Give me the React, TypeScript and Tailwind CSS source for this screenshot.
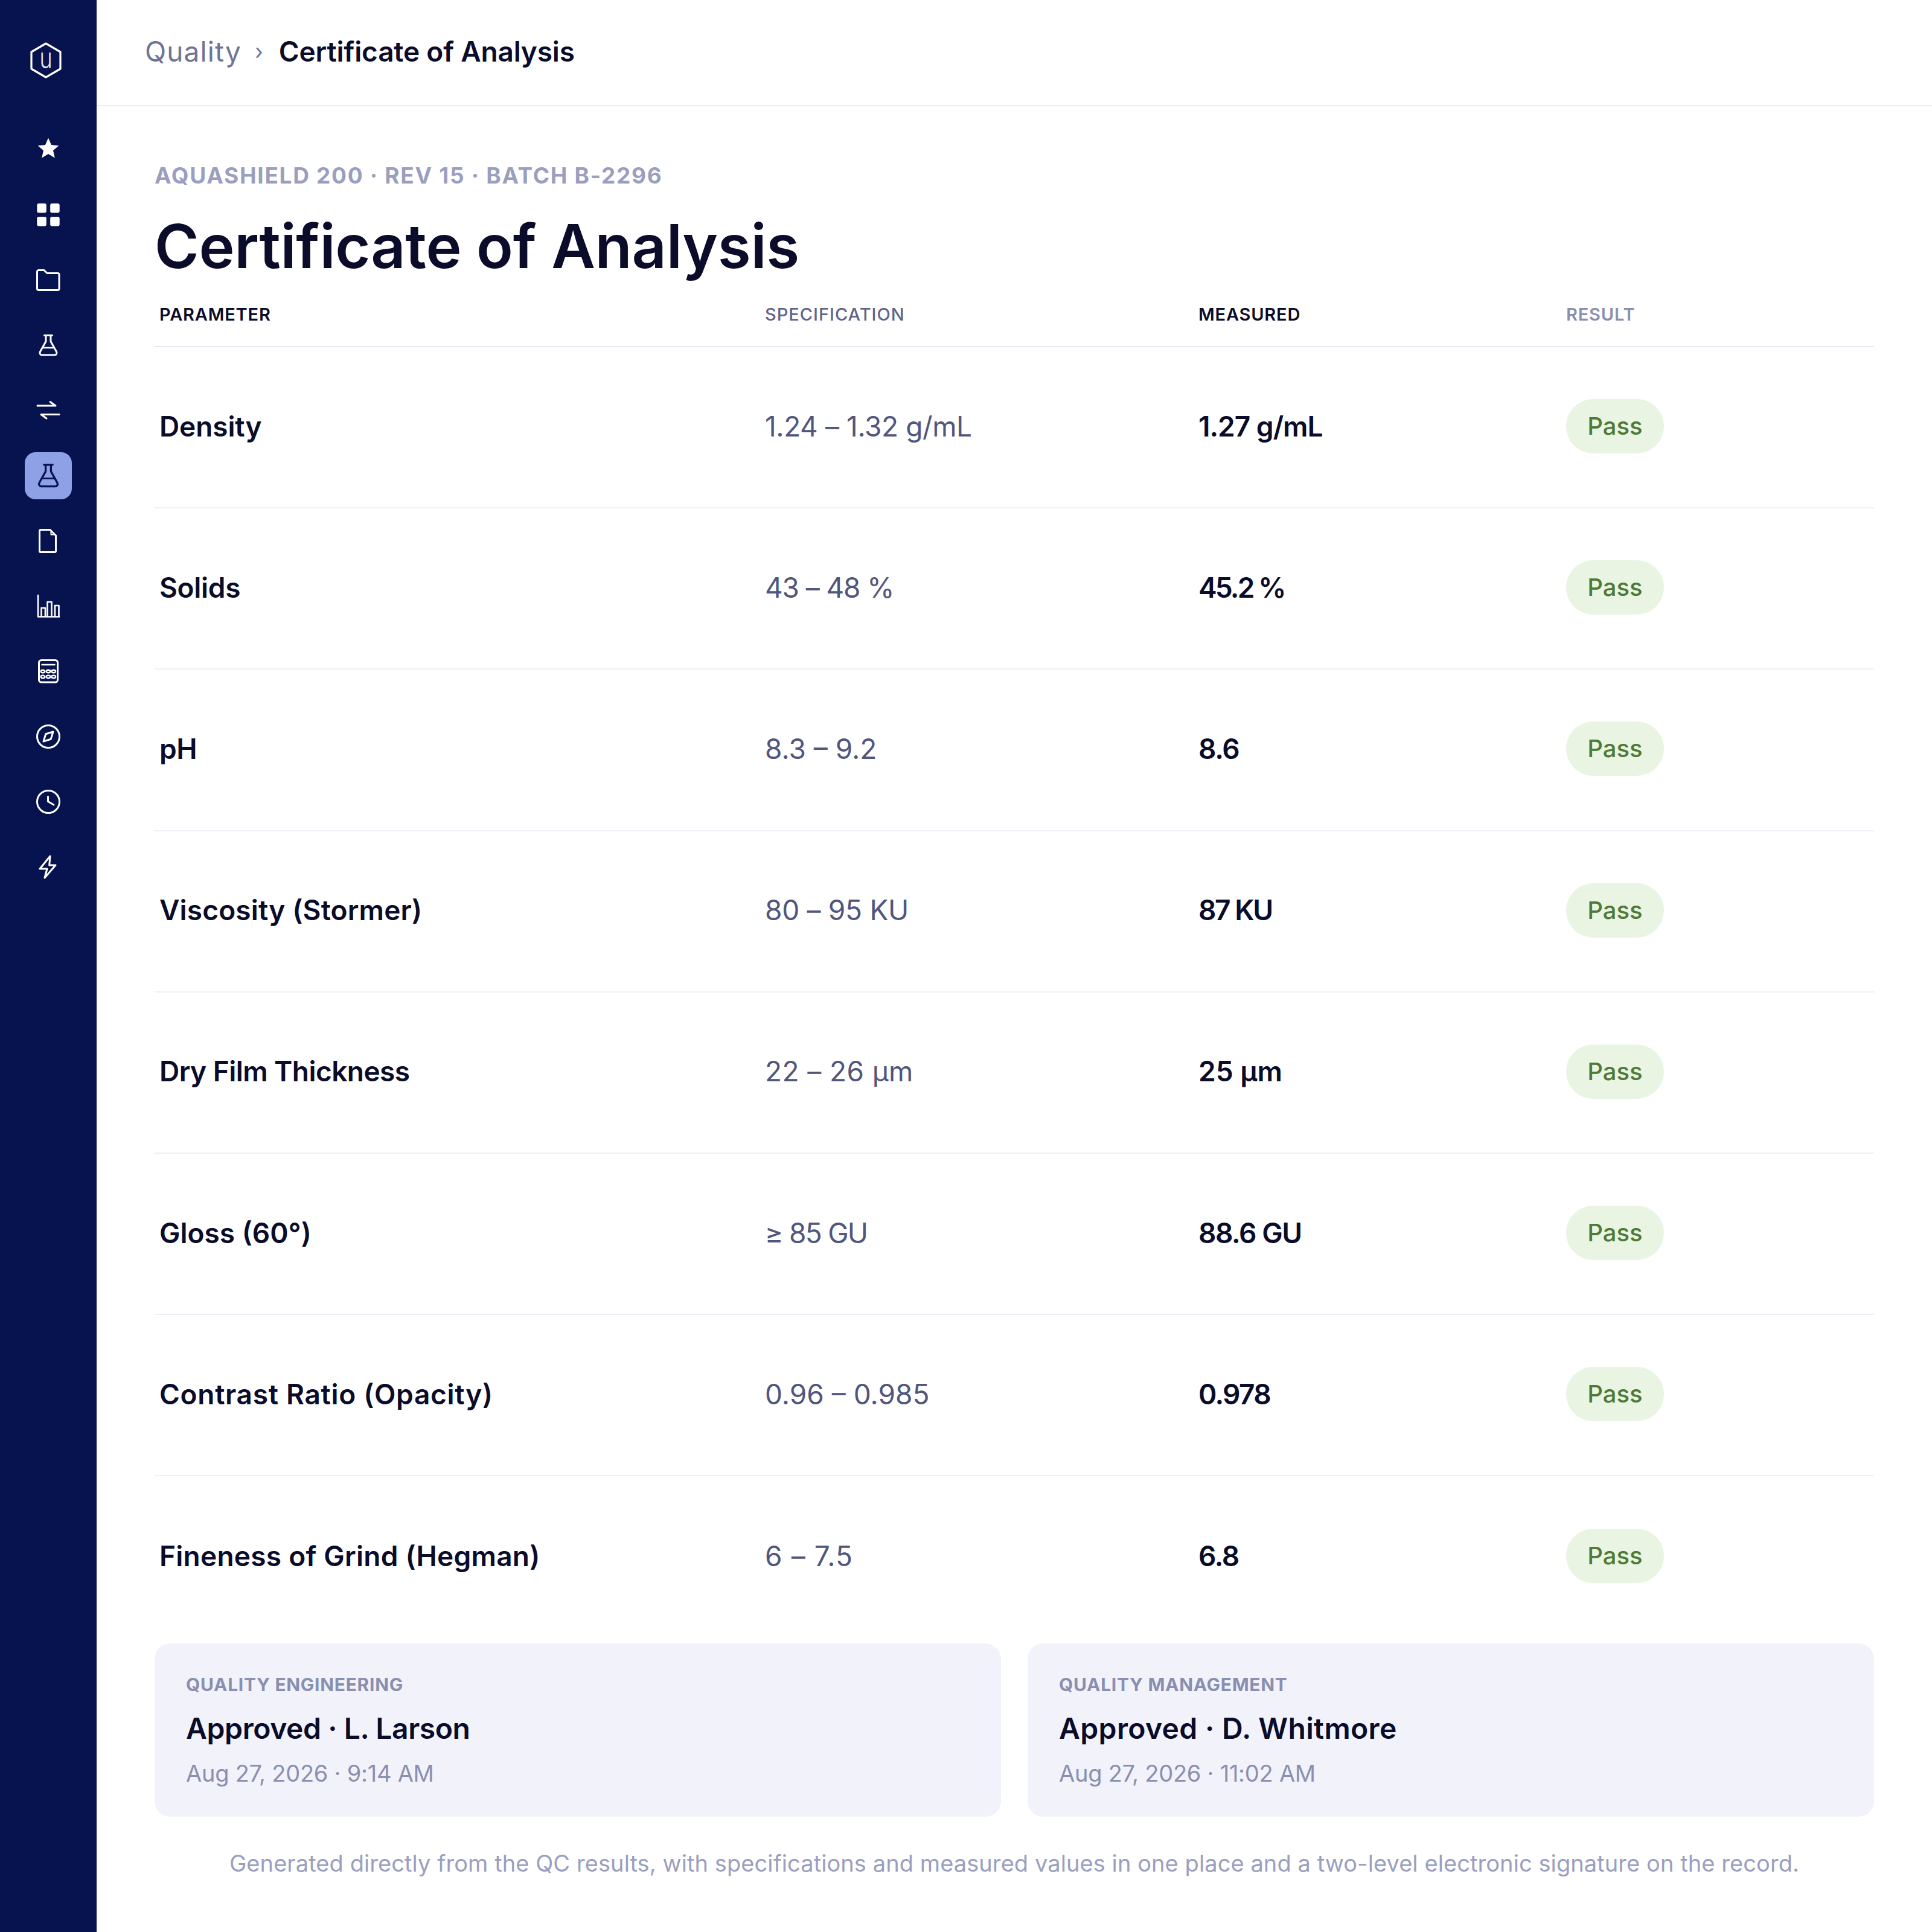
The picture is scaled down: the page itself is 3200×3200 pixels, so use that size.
const rows = [
  { name: 'Density', nameCls: 'tracking-[-0.1px]', spec: '1.24 – 1.32 g/mL', specCls: 'tracking-[-0.4px]', value: '1.27 g/mL', valueCls: 'tracking-[-1px]' },
  { name: 'Solids', nameCls: 'tracking-[-0.3px]', spec: '43 – 48 %', specCls: 'tracking-[-1.1px]', value: '45.2 %', valueCls: 'tracking-[-2.800px]' },
  { name: 'pH', nameCls: 'tracking-[-0.5px]', spec: '8.3 – 9.2', specCls: 'tracking-[0px]', value: '8.6', valueCls: 'tracking-[-1.300px]' },
  { name: 'Viscosity (Stormer)', nameCls: 'tracking-[0.15px]', spec: '80 – 95 KU', specCls: 'tracking-[-0.3px]', value: '87 KU', valueCls: 'tracking-[-2.400px]' },
  { name: 'Dry Film Thickness', nameCls: 'tracking-[-0.55px]', spec: '22 – 26 µm', specCls: 'tracking-[0.4px]', value: '25 µm', valueCls: 'tracking-[0px]' },
  { name: 'Gloss (60°)', nameCls: 'tracking-[0px]', spec: '≥ 85 GU', specCls: 'tracking-[-1.700px]', value: '88.6 GU', valueCls: 'tracking-[-1.400px]' },
  { name: 'Contrast Ratio (Opacity)', nameCls: 'tracking-[0.7px]', spec: '0.96 – 0.985', specCls: 'tracking-[0px]', value: '0.978', valueCls: 'tracking-[-1.600px]' },
  { name: 'Fineness of Grind (Hegman)', nameCls: 'tracking-[0.25px]', spec: '6 – 7.5', specCls: 'tracking-[1.100px]', value: '6.8', valueCls: 'tracking-[-1.300px]' },
];

const signoffs = [
  { team: 'QUALITY ENGINEERING', who: 'Approved · L. Larson', whoCls: 'tracking-[-0.4px]', when: 'Aug 27, 2026 · 9:14 AM' },
  { team: 'QUALITY MANAGEMENT', who: 'Approved · D. Whitmore', whoCls: 'tracking-[0.35px]', when: 'Aug 27, 2026 · 11:02 AM' },
];

function Icon({ children, size = 40 }: { children: React.ReactNode; size?: number }) {
  return (
    <svg
      width={size}
      height={size}
      viewBox="0 0 40 40"
      fill="none"
      stroke="currentColor"
      strokeWidth={3}
      strokeLinecap="round"
      strokeLinejoin="round"
    >
      {children}
    </svg>
  );
}

const flask = (
  <>
    <path d="M13.5 3.5h13" />
    <path d="M16 3.5v10L6.5 30.5a3.6 3.6 0 0 0 3.2 5.5h20.6a3.6 3.6 0 0 0 3.2-5.5L24 13.5v-10" />
    <path d="M11.5 24h17" strokeWidth={2.5} />
  </>
);

const navIcons = [
  <path key="star" d="M20 0.500l5 11.600 12.400 1.100-9.400 8.100 2.800 12.200L20 27l-10.800 6.500 2.800-12.200-9.400-8.100 12.400-1.100z" fill="currentColor" stroke="none" />,
  <g key="grid" fill="currentColor" stroke="none">
    <rect x="1.300" y="1" width="15.500" height="15.500" rx="3" />
    <rect x="23.200" y="1" width="15.500" height="15.500" rx="3" />
    <rect x="1.300" y="23" width="15.500" height="15.500" rx="3" />
    <rect x="23.200" y="23" width="15.500" height="15.500" rx="3" />
  </g>,
  <path key="folder" d="M1.500 6a2.500 2.500 0 0 1 2.500-2.500h9l5 5h18a2.500 2.500 0 0 1 2 2.500v23a2.500 2.500 0 0 1-2.500 2.500H4a2.500 2.500 0 0 1-2.500-2.500z" />,
  flask,
  <g key="swap">
    <path d="M2 12h30l-9-6.500" />
    <path d="M38 26.500H8l9 6.500" />
  </g>,
  null,
  <g key="doc">
    <path d="M7.500 1.500H23l9.500 9.500v25.500a2 2 0 0 1-2 2h-23a2 2 0 0 1-2-2v-33a2 2 0 0 1 2-2z" />
    <path d="M24.500 3v6.500h6.500" strokeWidth={2} />
  </g>,
  <g key="bars" strokeWidth={2.600}>
    <path d="M3 2v35.500h35" />
    <path d="M8.500 37V23h6.500v14" />
    <path d="M18.500 37V13h7v24" />
    <path d="M31 37V19h6.500v18" />
  </g>,
  <g key="calc">
    <rect x="4.500" y="1.500" width="31" height="36.500" rx="4" />
    <path d="M9.500 9h21" strokeWidth={2.500} />
    <g strokeWidth={2.400} fill="none">
      <ellipse cx="11" cy="20" rx="3.300" ry="2.200" />
      <ellipse cx="20" cy="20" rx="3.300" ry="2.200" />
      <ellipse cx="28.800" cy="20" rx="3.300" ry="2.200" />
      <ellipse cx="11" cy="29" rx="3.300" ry="2.200" />
      <ellipse cx="20" cy="29" rx="3.300" ry="2.200" />
      <ellipse cx="28.800" cy="29" rx="3.300" ry="2.200" />
    </g>
  </g>,
  <g key="compass">
    <circle cx="20" cy="20" r="18.500" />
    <path d="M28 12l-3.800 12.200L12 28l3.800-12.200z" />
  </g>,
  <g key="clock">
    <circle cx="20" cy="20" r="18.500" />
    <path d="M19.500 11.500v8l9.500 5.500" />
  </g>,
  <path key="bolt" d="M23 2L6 23h12l-4 15 18-21H21.700z" />,
];

export default function App() {
  return (
    <div className="flex w-[3200px] h-[3200px] bg-white font-['Inter',sans-serif] overflow-hidden">
      <aside className="w-[160px] shrink-0 bg-[#07134f] text-white flex flex-col items-center pt-[70px]">
        <div className="relative w-[54px] h-[60px] mr-[8px] mb-[79px]">
          <svg width="54" height="60" viewBox="0 0 54 60">
            <path d="M27 2l24 14v28L27 58 3 44V16z" fill="none" stroke="currentColor" strokeWidth="3.200" strokeLinejoin="round" />
          </svg>
          <span className="absolute inset-0 pb-[9px] flex items-center justify-center text-[48px] leading-none font-light text-[#e6e8f5] scale-x-75">
            u
          </span>
        </div>
        <nav className="flex flex-col items-center gap-[30px]">
          {navIcons.map((icon, i) =>
            i === 5 ? (
              <div key={i} className="w-[78px] h-[78px] rounded-[18px] bg-[#8fa1e6] text-[#07134f] flex items-center justify-center">
                <Icon size={44}>{flask}</Icon>
              </div>
            ) : (
              <div key={i} className="w-[78px] h-[78px] flex items-center justify-center">
                <Icon>{icon}</Icon>
              </div>
            ),
          )}
        </nav>
      </aside>

      <main className="flex-1 min-w-0">
        <header className="h-[176px] box-border border-b-2 border-[#e9ebf5] pl-[80px] pb-[4px] flex items-center text-[46px] gap-[22px]">
          <span className="text-[#6f7497] tracking-[1.100px]">Quality</span>
          <span className="text-[#6f7497] text-[36px]">›</span>
          <span className="ml-[4px] text-[#0a0c2a] font-semibold tracking-[-0.2px]">Certificate of Analysis</span>
        </header>

        <div className="px-[96px] pt-[95px]">
          <div className="text-[37px] leading-[40px] font-bold tracking-[1.700px] text-[#9a9fc0]">
            AQUASHIELD 200 · REV 15 · BATCH B-2296
          </div>
          <h1 className="mt-[37px] text-[100px] leading-[120px] font-semibold tracking-[-0.3px] text-[#0a0c2a]">
            Certificate of Analysis
          </h1>

          <div className="h-[107px] box-border border-b-2 border-[#e4e8f3] pl-[8px] grid grid-cols-[1003px_718px_609px_1fr] items-center text-[29px]">
            <span className="font-semibold tracking-[0.800px] text-[#0a0c2a]">PARAMETER</span>
            <span className="font-medium tracking-[1px] text-[#5f6488]">SPECIFICATION</span>
            <span className="font-semibold tracking-[0.800px] text-[#0a0c2a]">MEASURED</span>
            <span className="font-semibold tracking-[0.800px] text-[#8a8fb0]">RESULT</span>
          </div>

          {rows.map((row, i) => (
            <div
              key={row.name}
              className={`h-[267.200px] box-border pl-[8px] pb-[3px] grid grid-cols-[1003px_718px_609px_1fr] items-center text-[46px] ${
                i < rows.length - 1 ? 'border-b-2 border-[#eef0f7]' : ''
              }`}
            >
              <span className={`font-semibold text-[#0a0c2a] ${row.nameCls}`}>{row.name}</span>
              <span className={`text-[#51567c] ${row.specCls}`}>{row.spec}</span>
              <span className={`font-semibold text-[#0a0c2a] ${row.valueCls}`}>{row.value}</span>
              <span className="w-[162px] h-[90px] rounded-full bg-[#e9f4e3] text-[#4d7a35] text-[40px] font-medium flex items-center justify-center">
                Pass
              </span>
            </div>
          ))}

          <div className="mt-[9px] grid grid-cols-2 gap-[44px]">
            {signoffs.map((s) => (
              <div key={s.team} className="h-[287px] box-border rounded-[26px] bg-[#f1f2fa] px-[52px] pt-[48px]">
                <div className="text-[30px] leading-[40px] font-bold tracking-[0.7px] text-[#8a8fb0]">{s.team}</div>
                <div className={`mt-[21px] text-[48px] leading-[64px] font-semibold text-[#0a0c2a] ${s.whoCls}`}>{s.who}</div>
                <div className="mt-[18px] text-[38px] leading-[48px] tracking-[-0.25px] text-[#8a8fb0]">{s.when}</div>
              </div>
            ))}
          </div>

          <p className="mt-[53px] text-center text-[38px] leading-[48px] tracking-[0.08px] text-[#9a9fc0]">
            Generated directly from the QC results, with specifications and measured values in one place and a two-level electronic signature on the record.
          </p>
        </div>
      </main>
    </div>
  );
}
